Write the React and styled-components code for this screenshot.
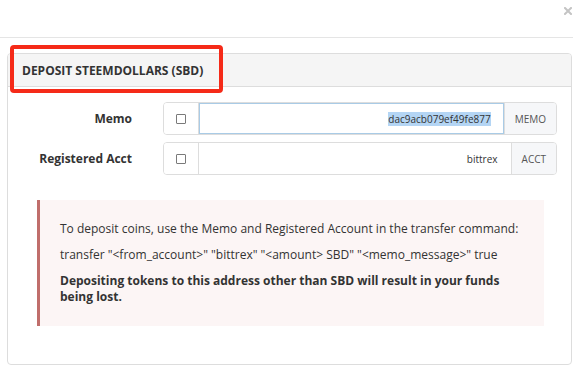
import styled, { createGlobalStyle } from "styled-components";

const GlobalStyle = createGlobalStyle`
  html, body {
    margin: 0;
    padding: 0;
    background: #fff;
    font-family: "Open Sans", "Liberation Sans", sans-serif;
    color: #333;
  }
  * { box-sizing: border-box; }
`;

const Modal = styled.div`
  width: 573px;
  height: 365px;
  overflow: hidden;
  background: #fff;
`;

const Header = styled.div`
  height: 38px;
  border-bottom: 1px solid #e5e5e5;
  display: flex;
  justify-content: flex-end;
  padding: 7px 1px 0 0;
`;

const Close = styled.button`
  border: 0;
  background: none;
  padding: 0;
  width: 8px;
  height: 8px;
  display: flex;
  cursor: pointer;
`;

const Body = styled.div`
  padding: 15px 1px 0 7px;
`;

const Panel = styled.div`
  position: relative;
  border: 1px solid #ddd;
  border-radius: 4px;
  height: 312px;
`;

const PanelHeading = styled.div`
  height: 33px;
  background: #f5f5f5;
  border-bottom: 1px solid #ddd;
  display: flex;
  align-items: center;
  padding: 0 14px;
  font-size: 12px;
  font-weight: 700;
  color: #333;
  border-radius: 3px 3px 0 0;
`;

const Highlight = styled.div`
  position: absolute;
  left: 2px;
  top: -9px;
  width: 213px;
  height: 48px;
  border: 4px solid #f52a18;
  border-radius: 4px;
`;

const PanelBody = styled.div`
  padding: 15px 0 0 0;
`;

const Form = styled.div`
  display: flex;
  flex-direction: column;
  gap: 7px;
`;

const Row = styled.div`
  display: grid;
  grid-template-columns: 124px 394px;
  column-gap: 31px;
  align-items: center;
`;

const Label = styled.label`
  text-align: right;
  font-size: 12px;
  font-weight: 700;
  color: #333;
`;

const InputGroup = styled.div`
  display: flex;
  height: 33px;
  border: 1px solid #ddd;
  border-radius: 4px;
  overflow: hidden;
`;

const CheckAddon = styled.div`
  width: 35px;
  flex: none;
  display: flex;
  align-items: center;
  justify-content: center;
  background: #fff;
  border-right: 1px solid #ddd;
`;

const Box = styled.span`
  width: 10px;
  height: 10px;
  border: 1px solid #7a7a7a;
  border-radius: 1px;
  background: #fff;
`;

const Field = styled.div`
  flex: 1;
  display: flex;
  align-items: center;
  justify-content: flex-end;
  padding: 0 13px;
  font-size: 10px;
  color: #333;
  background: #fff;
  ${(p) => p.$focus && `
    box-shadow: inset 0 0 0 1px #a9cbe6;
  `}
`;

const Selected = styled.span`
  background: #b4d5f4;
`;

const TextAddon = styled.div`
  flex: none;
  display: flex;
  align-items: center;
  padding: 0 ${(p) => p.$pad}px;
  background: #f6f7f9;
  border-left: 1px solid #ddd;
  font-size: 10px;
  color: #555;
`;

const Alert = styled.div`
  margin: 25px 27px 0 29px;
  background: #fcf5f5;
  border-left: 3px solid #c06e6b;
  padding: 11px 20px 21px 20px;
  font-size: 12px;
  color: #333;
  line-height: 16px;
`;

const P = styled.p`
  margin: 10px 0 0;
  font-weight: ${(p) => (p.$bold ? 700 : 400)};
`;

export default function App() {
  return (
    <>
      <GlobalStyle />
      <Modal>
        <Header>
          <Close aria-label="Close">
            <svg width="8" height="8" viewBox="0 0 8 8">
              <path d="M1 1 L7 7 M7 1 L1 7" stroke="#c4c4c4" strokeWidth="2" strokeLinecap="square" />
            </svg>
          </Close>
        </Header>
        <Body>
          <Panel>
            <PanelHeading>DEPOSIT STEEMDOLLARS (SBD)</PanelHeading>
            <Highlight />
            <PanelBody>
              <Form>
                <Row>
                  <Label>Memo</Label>
                  <InputGroup>
                    <CheckAddon><Box /></CheckAddon>
                    <Field $focus>
                      <Selected>dac9acb079ef49fe877</Selected>
                    </Field>
                    <TextAddon $pad={10}>MEMO</TextAddon>
                  </InputGroup>
                </Row>
                <Row>
                  <Label>Registered Acct</Label>
                  <InputGroup>
                    <CheckAddon><Box /></CheckAddon>
                    <Field>bittrex</Field>
                    <TextAddon $pad={10}>ACCT</TextAddon>
                  </InputGroup>
                </Row>
              </Form>
              <Alert>
                <P>To deposit coins, use the Memo and Registered Account in the transfer command:</P>
                <P>transfer "&lt;from_account&gt;" "bittrex" "&lt;amount&gt; SBD" "&lt;memo_message&gt;" true</P>
                <P $bold>Depositing tokens to this address other than SBD will result in your funds being lost.</P>
              </Alert>
            </PanelBody>
          </Panel>
        </Body>
      </Modal>
    </>
  );
}
